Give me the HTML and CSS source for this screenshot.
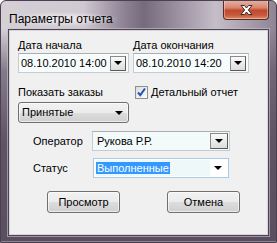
FILE: index.html
```html
<!DOCTYPE html>
<html lang="ru">
<head>
<meta charset="UTF-8">
<title>Параметры отчета</title>
<link rel="stylesheet" href="styles.css">
</head>
<body>
<div class="window">
    <div class="titlebar">
        <span class="title">Параметры отчета</span>
        <a class="close">
            <svg width="17" height="12" viewBox="0 0 17 12">
                <path d="M3 1.5h3.5l2 2.5 2-2.5h3.5l-3.7 4.5 3.7 4.5h-3.5l-2-2.5-2 2.5h-3.5l3.7-4.5z" fill="#fff" stroke="#3a2a2a" stroke-width="1"/>
            </svg>
        </a>
    </div>
    <div class="client">
        <div class="dates">
            <div class="col">
                <label class="lbl">Дата начала</label>
                <div class="picker">
                    <span class="val">08.10.2010 14:00</span>
                    <span class="dropbtn"><i class="arrow"></i></span>
                </div>
            </div>
            <div class="col">
                <label class="lbl">Дата окончания</label>
                <div class="picker wide">
                    <span class="val">08.10.2010 14:20</span>
                    <span class="dropbtn"><i class="arrow"></i></span>
                </div>
            </div>
        </div>
        <div class="optrow">
            <span class="lbl">Показать заказы</span>
            <span class="check">
                <span class="box">
                    <svg width="11" height="11" viewBox="0 0 11 11">
                        <path d="M2 5.5l2.3 2.6 4.7-6.6" fill="none" stroke="#2452b8" stroke-width="2"/>
                    </svg>
                </span>
                <span class="lbl">Детальный отчет</span>
            </span>
        </div>
        <div class="listbtn">
            <span>Принятые</span>
            <i class="arrow"></i>
        </div>
        <div class="fields">
            <span class="lbl">Оператор</span>
            <div class="combo">
                <span class="val">Рукова Р.Р.</span>
                <span class="dropbtn"><i class="arrow"></i></span>
            </div>
            <span class="lbl">Статус</span>
            <div class="combo focused">
                <span class="edit"><span class="sel">Выполненные</span></span>
                <i class="arrow"></i>
            </div>
        </div>
        <div class="buttons">
            <a class="btn">Просмотр</a>
            <a class="btn">Отмена</a>
        </div>
    </div>
</div>
</body>
</html>
```

FILE: styles.css
```css
body {
    margin: 0;
    font: 11px/13px "Liberation Sans", Arial, sans-serif;
    color: #000;
}
.window {
    width: 277px;
    height: 243px;
    box-sizing: border-box;
    border: 1px solid #4a4050;
    border-radius: 6px 6px 0 0;
    background:
        linear-gradient(180deg, rgba(98,87,106,0) 0px, rgba(98,87,106,0) 28px, rgba(98,87,106,.7) 70px, #5f5466 140px, #5a4f61 100%),
        linear-gradient(90deg, #d4d0d6 0%, #cfc9d1 30%, #8d8193 45%, #766b7c 52%, #a69cab 68%, #c5bec8 78%, #8e8494 100%);
    box-shadow: inset 0 -1px 0 #8a8090;
    overflow: hidden;
}
.titlebar {
    height: 28px;
    display: flex;
    justify-content: space-between;
    align-items: flex-start;
}
.title {
    margin: 11px 0 0 8px;
    padding: 0 4px 0 0;
    font: 12px/14px "Liberation Sans", Arial, sans-serif;
    color: #000;
    background: radial-gradient(ellipse at center, rgba(255,255,255,.55) 20%, rgba(255,255,255,0) 75%);
}
.close {
    margin: -1px 7px 0 0;
    width: 46px;
    height: 20px;
    box-sizing: border-box;
    border: 1px solid #5a2a22;
    border-top: 0;
    border-radius: 0 0 4px 4px;
    background: linear-gradient(#e8b4a6 0%, #d88670 40%, #c2472b 55%, #c65a3c 80%, #e08a68 100%);
    display: flex;
    justify-content: center;
    align-items: center;
    box-shadow: inset 0 0 0 1px rgba(255,255,255,.35);
}
.client {
    margin: 0 0 0 7px;
    width: 261px;
    height: 207px;
    box-sizing: border-box;
    border: 1px solid #4e4454;
    box-shadow: inset 0 0 0 1px #d8d4da, 0 0 0 1px rgba(200,194,204,.6);
    background: #f0f0f0;
    padding: 9px 0 0 9px;
}
.dates {
    display: grid;
    grid-template-columns: 115px 117px;
}
.col .lbl {
    display: block;
    height: 14px;
}
.picker {
    width: 111px;
    height: 20px;
    box-sizing: border-box;
    border: 1px solid #c5cad3;
    border-top-color: #abadb3;
    background: #f7fcfc;
    display: flex;
    align-items: center;
    justify-content: space-between;
    padding: 0 2px 0 2px;
}
.picker.wide {
    width: 116px;
}
.dropbtn {
    width: 16px;
    height: 15px;
    box-sizing: border-box;
    border: 1px solid #8a8a8a;
    border-right-color: #5a5a5a;
    border-bottom-color: #5a5a5a;
    background: linear-gradient(#fafafa, #dcdcdc);
    display: flex;
    align-items: center;
    justify-content: center;
}
.arrow {
    width: 0;
    height: 0;
    border-left: 4px solid transparent;
    border-right: 4px solid transparent;
    border-top: 4px solid #000;
}
.optrow {
    margin-top: 12px;
    height: 15px;
    display: flex;
    align-items: center;
}
.optrow > .lbl {
    width: 117px;
}
.check {
    display: flex;
    align-items: center;
    gap: 3px;
}
.box {
    width: 13px;
    height: 13px;
    box-sizing: border-box;
    border: 1px solid #8e8f8f;
    background: linear-gradient(135deg, #dcdcdc, #fbfbfb);
    display: flex;
    align-items: center;
    justify-content: center;
}
.listbtn {
    margin-top: 2px;
    width: 111px;
    height: 21px;
    box-sizing: border-box;
    border: 1px solid #707070;
    border-radius: 3px;
    background: linear-gradient(#f2f2f2 0%, #ebebeb 50%, #dddddd 51%, #cfcfcf 100%);
    box-shadow: inset 0 0 0 1px rgba(255,255,255,.6);
    display: flex;
    align-items: center;
    justify-content: space-between;
    padding: 0 5px 0 3px;
}
.fields {
    margin: 8px 0 0 15px;
    display: grid;
    grid-template-columns: 59px 138px;
    grid-auto-rows: 20px;
    row-gap: 7px;
    align-items: center;
}
.combo {
    height: 20px;
    box-sizing: border-box;
    border: 1px solid #c5cad3;
    border-top-color: #abadb3;
    background: #f2fafa;
    display: flex;
    align-items: center;
    justify-content: space-between;
    padding: 0 1px 0 4px;
}
.combo .dropbtn {
    width: 18px;
    height: 16px;
}
.combo.focused {
    margin-left: 1px;
    width: 136px;
    border: 1px solid #a8cbe8;
    background: #fff;
    padding: 0 6px 0 2px;
}
.edit {
    width: 114px;
    height: 16px;
    background: #eef8f8;
    display: flex;
    align-items: center;
}
.sel {
    background: #3399ff;
    color: #fff;
    line-height: 12px;
    padding: 0 1px;
}
.buttons {
    margin: 13px 0 0 29px;
    display: flex;
    gap: 47px;
}
.btn {
    width: 73px;
    height: 22px;
    box-sizing: border-box;
    border: 1px solid #707070;
    border-radius: 3px;
    background: linear-gradient(#f2f2f2 0%, #ebebeb 50%, #dddddd 51%, #cfcfcf 100%);
    box-shadow: inset 0 0 0 1px rgba(255,255,255,.6);
    display: flex;
    align-items: center;
    justify-content: center;
}
```
